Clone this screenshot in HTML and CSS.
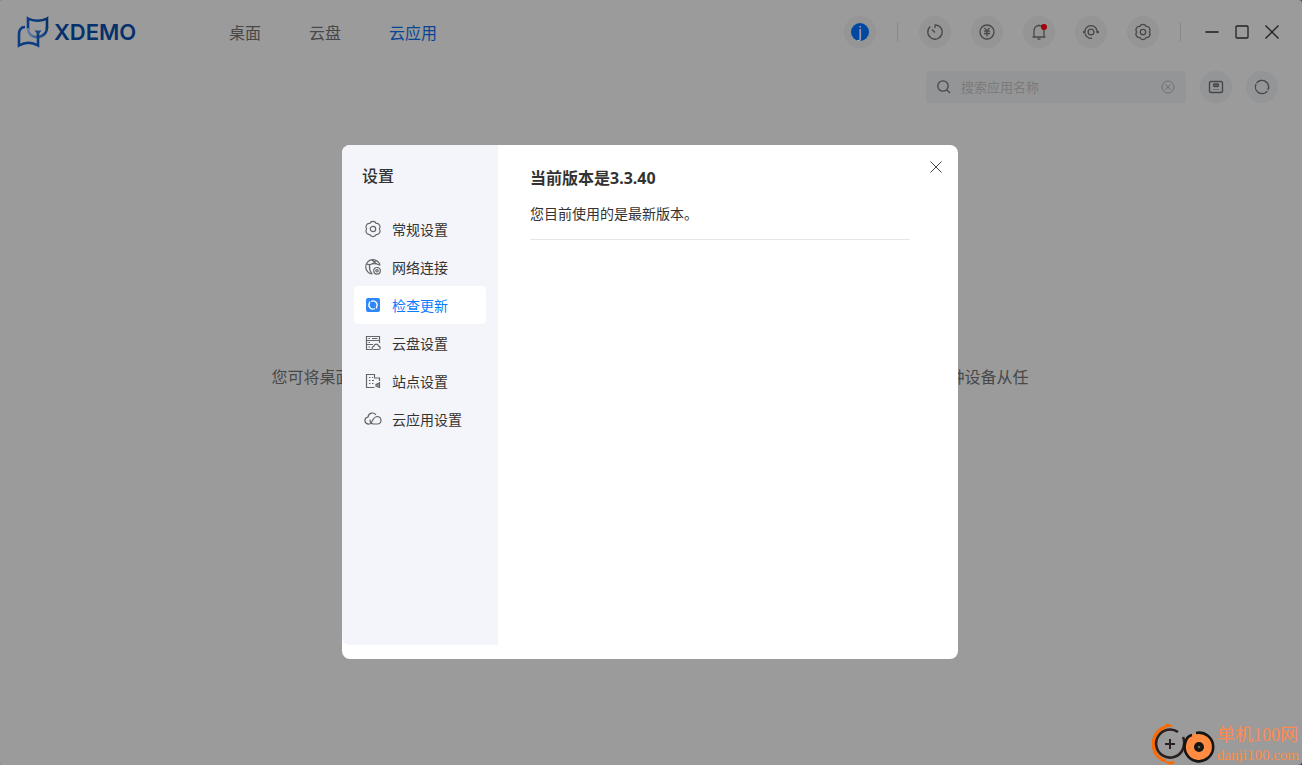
FILE: index.html
```html
<!DOCTYPE html>
<html lang="zh-CN">
<head>
<meta charset="utf-8">
<meta name="viewport" content="width=device-width, initial-scale=1">
<title>XDEMO</title>
<link rel="stylesheet" href="styles.css">
</head>
<body>
<div class="app">
  <header class="topbar">
    <div class="logo">
      <svg class="logo-mark" width="32" height="34" viewBox="0 0 32 34" fill="none" stroke-width="2.6">
        <defs>
          <linearGradient id="mark" x1="0" y1="0" x2="1" y2="0"><stop offset="0" stop-color="#0b3c86"/><stop offset="1" stop-color="#0a3069"/></linearGradient>
          <linearGradient id="fade" x1="0" y1="0" x2="1" y2="0"><stop offset="0" stop-color="#5f7ba5"/><stop offset="1" stop-color="#0b3878"/></linearGradient>
        </defs>
        <path d="M11 14V3.500C16 6.500 25 6.500 30 3.500V13" stroke="url(#mark)"/>
        <path d="M30 12C30 18 26 22 20 22S11 18 11 13" stroke="url(#fade)"/>
        <path d="M8 12C4 12 2 15 2 19V30.500C8 27 15 27 21 30.500V16" stroke="#0b3c80"/>
        <path d="M17.500 15.500H24.500L21 20Z" fill="#1c4683"/>
      </svg>
      <span class="logo-text">XDEMO</span>
    </div>
    <nav class="tabs">
      <a class="tab" href="#desktop">桌面</a>
      <a class="tab" href="#disk">云盘</a>
      <a class="tab tab-active" href="#apps">云应用</a>
    </nav>
    <div class="actions">
      <button class="round" aria-label="账户"><span class="avatar">j</span></button>
      <span class="rule"></span>
      <div class="tools">
        <button class="round" aria-label="用时"><svg width="18" height="18" viewBox="0 0 18 18"><path d="M9 1.500V5M9 1.800A7.200 7.200 0 1 1 4.200 3.600M6 6.500L9 9.500"/></svg></button>
        <button class="round" aria-label="费用"><svg width="18" height="18" viewBox="0 0 18 18"><circle cx="9" cy="9" r="7"/><path d="M6.500 4.800L9 7.800L11.500 4.800M6 8.200H12M6 10.500H12M9 7.800V13.500"/></svg></button>
        <button class="round" aria-label="通知"><svg width="18" height="18" viewBox="0 0 18 18"><path d="M2.500 14H15.500M4 14V8C4 4.800 6 2.500 9 2.500S14 4.800 14 8V14M7.500 16H10.500M9 1.500V2.500"/></svg><span class="dot"></span></button>
        <button class="round" aria-label="客服"><svg width="18" height="18" viewBox="0 0 18 18"><circle cx="9" cy="9" r="2.900"/><path d="M2.900 10A6.200 6.200 0 1 1 15.100 10M3 10.500A6.200 6.200 0 0 0 10 15.200"/><path d="M2 8V10.200M16 8V10.200" stroke-width="1.800"/></svg></button>
        <button class="round" aria-label="设置"><svg width="18" height="18" viewBox="0 0 18 18"><path d="M15.400 9A3.500 3.500 0 0 1 12.200 14.540A3.500 3.500 0 0 1 5.800 14.540A3.500 3.500 0 0 1 2.600 9A3.500 3.500 0 0 1 5.800 3.460A3.500 3.500 0 0 1 12.200 3.460A3.500 3.500 0 0 1 15.400 9Z"/><circle cx="9" cy="9" r="2.700"/></svg></button>
      </div>
      <span class="rule"></span>
      <div class="window-buttons">
        <button class="win" aria-label="最小化"><svg width="16" height="16" viewBox="0 0 16 16"><path d="M1.500 8H14.500" stroke-width="1.600"/></svg></button>
        <button class="win" aria-label="最大化"><svg width="16" height="16" viewBox="0 0 16 16"><rect x="2" y="2" width="12" height="12" rx="1"/></svg></button>
        <button class="win" aria-label="关闭"><svg width="16" height="16" viewBox="0 0 16 16"><path d="M1.500 1.500L14.500 14.500M14.500 1.500L1.500 14.500"/></svg></button>
      </div>
    </div>
  </header>

  <div class="toolbar">
    <div class="search">
      <svg width="16" height="16" viewBox="0 0 16 16"><circle cx="7" cy="7" r="5.200"/><path d="M11 11L14 14"/></svg>
      <input class="search-input" type="text" placeholder="搜索应用名称" aria-label="搜索应用名称">
      <button class="clear" aria-label="清空"><svg width="14" height="14" viewBox="0 0 14 14"><circle cx="7" cy="7" r="6"/><path d="M4.300 4.300L9.700 9.700M9.700 4.300L4.300 9.700"/></svg></button>
    </div>
    <button class="round round-cool" aria-label="存储"><svg width="18" height="18" viewBox="0 0 18 18"><rect x="2.500" y="3.500" width="13" height="11" rx="1.500" stroke-width="1.400"/><rect x="6.500" y="6" width="5" height="2.500" rx="1" fill="#666"/><path d="M5.500 11.500H12.500" stroke-width="1" stroke="#777"/></svg></button>
    <button class="round round-cool" aria-label="刷新"><svg width="18" height="18" viewBox="0 0 18 18"><path d="M3.500 5.200A6.700 6.700 0 0 1 15 12M14.300 13.100A6.700 6.700 0 0 1 3 6.100" stroke-width="1.400"/></svg></button>
  </div>

  <main class="stage">
    <p class="hint"><span>您可将桌面</span><span>种设备从任</span></p>
  </main>

  <div class="overlay">
    <section class="dialog" role="dialog" aria-labelledby="dialog-title">
      <aside class="side">
        <h2 class="side-title" id="dialog-title">设置</h2>
        <div class="menu">
          <button class="item"><svg width="18" height="18" viewBox="0 0 18 18"><path d="M15.400 9A3.500 3.500 0 0 1 12.200 14.540A3.500 3.500 0 0 1 5.800 14.540A3.500 3.500 0 0 1 2.600 9A3.500 3.500 0 0 1 5.800 3.460A3.500 3.500 0 0 1 12.200 3.460A3.500 3.500 0 0 1 15.400 9Z"/><circle cx="9" cy="9" r="2.700"/></svg>常规设置</button>
          <button class="item"><svg width="18" height="18" viewBox="0 0 18 18"><path d="M8.500 16A7.200 7.200 0 1 1 16 7.500M2.300 6Q8 8 12 2.500M5.500 7.200Q5 12 8 16M5.500 7Q10 4.500 15.500 7M8 2L12.500 5.800"/><circle cx="13" cy="12.800" r="3.300"/><circle cx="13" cy="12.800" r="1.200"/></svg>网络连接</button>
          <button class="item item-active" aria-current="page"><svg width="18" height="18" viewBox="0 0 18 18"><rect x="2" y="2" width="14" height="14" rx="2" fill="#2f86f6" stroke="none"/><path d="M7 5.500A4 4 0 0 1 12.200 11.400M11 12.500A4 4 0 0 1 5.800 6.600M5.500 5.500V7.500M12.500 10.500V12.500" stroke="#fff" stroke-width="1.300"/></svg>检查更新</button>
          <button class="item"><svg width="18" height="18" viewBox="0 0 18 18"><path d="M8 15.500H2.500V2.500H15.500V9M2.500 6.500H15.500M2.500 10.500H9M4.500 4.500H6M4.500 8.500H6M4.500 13H6M8 4.500H13.500"/><path d="M10 15.500C7.500 15.500 7.500 12.500 9.800 12.300C10.300 9.500 14.200 9.500 14.600 12.200C17 12.700 16.500 15.500 14.500 15.500Z"/></svg>云盘设置</button>
          <button class="item"><svg width="18" height="18" viewBox="0 0 18 18"><path d="M10.500 15.500H2.500V2.500H10.500V6H15.500V9M5 5.500H6.500M8 5.500H9M5 8.500H6.500M8 8.500H10M5 11.500H6.500M8 11.500H9.500"/><path d="M15.500 10V16M15.500 11L12 12.500V14L15.500 15.500M14 11V15"/></svg>站点设置</button>
          <button class="item"><svg width="18" height="18" viewBox="0 0 18 18"><path d="M5.500 14C0 14.500 -.5 8 4 7.200C4.500 2.500 10 1.800 12 5M5.500 14C8.500 14 8 7 13 6.500C18 6.500 18.500 14 13.300 14H9.500C7 13.500 5.800 11.500 6.200 9.500"/></svg>云应用设置</button>
        </div>
      </aside>
      <div class="content">
        <div class="version">
          <h1 class="version-title">当前版本是3.3.40</h1>
          <p class="version-note">您目前使用的是最新版本。</p>
        </div>
      </div>
      <button class="close" aria-label="关闭设置"><svg width="14" height="14" viewBox="0 0 14 14"><path d="M1.500 1.500L12.500 12.500M12.500 1.500L1.500 12.500"/></svg></button>
    </section>
  </div>

  <div class="watermark">
    <svg width="66" height="42" viewBox="0 0 66 42" fill="none">
      <path d="M15 4C-2 8 -2 34 15 38" stroke="#ff6a00" stroke-width="3"/>
      <path d="M9 5Q13 4 15 1Q19 0 22 4Q15 3 9 7ZM9 36Q15 40 24 38Q22 43 17 41Q14 38 9 36Z" fill="#ff6a00"/>
      <path d="M27 9A14 14 0 1 0 31 28Q35 20 32 14" stroke="#2b2020" stroke-width="2.600"/>
      <path d="M14 21H24M19 16V26" stroke="#2b2020" stroke-width="2"/>
      <circle cx="48" cy="24" r="14" fill="#ff8c42"/>
      <path d="M45 10A14.300 14.300 0 1 1 34.500 19Q36 13 41 12" stroke="#171414" stroke-width="2.600"/>
      <circle cx="48" cy="24" r="5" fill="#171414"/><circle cx="48" cy="24" r="1.300" fill="#665"/>
    </svg>
    <div class="watermark-text"><span class="watermark-name">单机100网</span><span class="watermark-site">danji100.com</span></div>
  </div>
</div>
</body>
</html>
```
FILE: styles.css
```css
* { box-sizing: border-box; }

body {
  margin: 0;
  background: #1c3f9e;
  color: #333;
  font-family: "Noto Sans", "Noto Sans CJK SC", sans-serif;
  font-size: 14px;
}

h1, h2, p { margin: 0; }

button {
  padding: 0;
  border: 0;
  background: none;
  color: inherit;
  font: inherit;
}

button svg, .search svg {
  display: block;
  flex: none;
  fill: none;
  stroke: #484848;
  stroke-width: 1.3;
}

.app {
  position: relative;
  display: flex;
  flex-direction: column;
  min-height: 100vh;
  border-radius: 1px 3px 4px 1px;
  background: #9b9b9b;
  overflow: hidden;
}

.topbar {
  display: flex;
  align-items: center;
  height: 64px;
  padding: 0 22px 0 17px;
}

.logo {
  display: flex;
  align-items: center;
  gap: 5px;
  width: 212px;
}

.logo-text {
  color: #06306b;
  font: 600 22px/32px Inter, sans-serif;
}

.tabs {
  display: flex;
  gap: 48px;
  padding-top: 2px;
  font-size: 16px;
}

.tab {
  color: #484848;
  line-height: 24px;
  text-decoration: none;
}

.tab-active { color: #0a4594; }

.actions {
  display: flex;
  align-items: center;
  gap: 21px;
  margin-left: auto;
}

.tools {
  display: flex;
  gap: 20px;
}

.rule {
  width: 1px;
  height: 20px;
  background: #898989;
}

.round {
  position: relative;
  display: grid;
  place-items: center;
  width: 32px;
  height: 32px;
  border-radius: 50%;
  background: #959595;
}

.round-cool { background: #949597; }

.avatar {
  width: 18px;
  height: 18px;
  border-radius: 50%;
  background: #0048a0;
  color: #b5b5b5;
  line-height: 17px;
  text-align: center;
}

.dot {
  position: absolute;
  top: 8px;
  right: 8px;
  width: 6px;
  height: 6px;
  border-radius: 50%;
  background: #a00008;
}

.window-buttons {
  display: flex;
  gap: 14px;
  padding-left: 2px;
}

.win svg { stroke: #222; }

.toolbar {
  display: flex;
  justify-content: flex-end;
  gap: 14px;
  padding: 7px 24px 0;
}

.search {
  display: flex;
  align-items: center;
  gap: 9px;
  width: 260px;
  height: 32px;
  padding: 0 11px 0 10px;
  border-radius: 4px;
  background: #949597;
}

.search-input {
  flex: 1;
  min-width: 0;
  padding: 0;
  border: 0;
  outline: 0;
  background: none;
  font: inherit;
  font-size: 13px;
  line-height: 20px;
}

.search-input::placeholder { color: #7b7b7b; }

.clear svg {
  stroke: #707070;
  stroke-width: 1;
}

.stage {
  padding: 262px 2px 0 0;
}

.hint {
  display: flex;
  justify-content: space-between;
  max-width: 757px;
  margin: 0 auto;
  color: #484848;
  font-size: 16px;
  line-height: 24px;
}

.overlay {
  position: absolute;
  inset: 0;
  display: flex;
  justify-content: center;
  align-items: flex-start;
  padding: 145px 2px 0 0;
}

.dialog {
  position: relative;
  display: flex;
  align-items: flex-start;
  width: 616px;
  padding-bottom: 14px;
  border-radius: 8px;
  background: #fff;
}

.side {
  width: 156px;
  min-height: 500px;
  padding: 19px 12px;
  border-radius: 8px 0 0 8px;
  background: #f4f5fa;
}

.side-title {
  padding: 0 8px;
  font-size: 16px;
  font-weight: 500;
  line-height: 24px;
}

.menu {
  display: flex;
  flex-direction: column;
  margin-top: 22px;
}

.item {
  display: flex;
  align-items: center;
  gap: 10px;
  height: 38px;
  padding: 0 10px;
  border-radius: 4px;
  text-align: left;
}

.item svg {
  stroke: #666;
  stroke-width: 1.2;
}

.item-active {
  background: #fff;
  color: #0a7cff;
}

.content {
  flex: 1;
  padding: 20px 48px 0 32px;
}

.version {
  padding-bottom: 14px;
  border-bottom: 1px solid #e6e6e6;
}

.version-title {
  font-size: 16px;
  font-weight: 700;
  line-height: 26px;
}

.version-note {
  margin-top: 12px;
  line-height: 22px;
}

.close {
  position: absolute;
  top: 15px;
  right: 15px;
}

.close svg { stroke-width: 1; }

.watermark {
  position: absolute;
  right: 3px;
  bottom: 0;
  display: flex;
  align-items: flex-end;
  color: #ff8a4c;
}

.watermark-text {
  display: flex;
  flex-direction: column;
  font-family: "Liberation Serif", "Noto Sans CJK SC", serif;
}

.watermark-name {
  font-size: 18px;
  line-height: 20px;
}

.watermark-site {
  font-size: 15px;
  line-height: 20px;
}
```
